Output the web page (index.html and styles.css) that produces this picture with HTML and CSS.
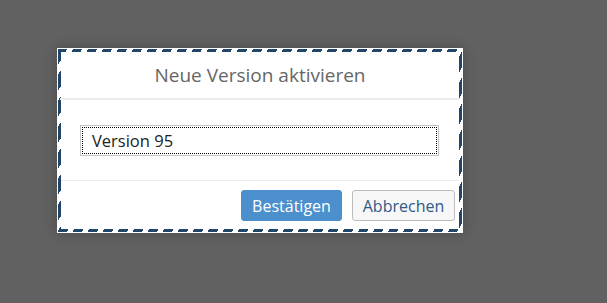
FILE: index.html
```html
<!DOCTYPE html>
<html lang="de">
<head>
<meta charset="utf-8">
<link rel="stylesheet" href="styles.css">
</head>
<body>
<div class="dialog">
  <div class="ring">
    <div class="inner">
      <div class="header">Neue Version aktivieren</div>
      <div class="content">
        <div class="input"><span class="focus">Version 95</span></div>
      </div>
      <div class="footer">
        <button class="btn primary">Bestätigen</button>
        <button class="btn secondary">Abbrechen</button>
      </div>
    </div>
  </div>
</div>
</body>
</html>
```
FILE: styles.css
```css
html, body { margin: 0; height: 100%; }
body {
  background: #616161;
  font-family: "Open Sans", "Noto Sans", sans-serif;
  padding: 48px 0 0 57px;
  box-sizing: border-box;
}
.dialog {
  width: 406px;
  height: 185px;
  box-sizing: border-box;
  background: #fff;
  padding: 1px;
  box-shadow: 0 0 12px rgba(0,0,0,0.25);
}
.ring {
  height: 100%;
  box-sizing: border-box;
  padding: 3px;
  background: repeating-linear-gradient(120deg, #22466a 0 8px, #fff 8px 13px);
}
.inner {
  background: #fff;
  height: 100%;
  display: flex;
  flex-direction: column;
}
.header {
  height: 46px;
  border-bottom: 2px solid #ececec;
  display: flex;
  align-items: center;
  justify-content: center;
  color: #666;
  font-size: 19px;
  margin: 0 -1px;
  flex: none;
}
.content {
  padding: 25px 20px 24px 19px;
  border-bottom: 1px solid #ececec;
}
.input {
  height: 31px;
  box-sizing: border-box;
  border: 1px solid #c4c4c4;
  padding: 1px;
  display: flex;
}
.focus {
  flex: 1;
  border: 1px dotted #000;
  display: flex;
  align-items: center;
  padding-left: 9px;
  font-size: 16.5px;
  color: #222;
}
.footer {
  flex: 1;
  display: flex;
  justify-content: flex-end;
  align-items: flex-start;
  gap: 10px;
  padding: 9px 4px 0 0;
}
.btn {
  height: 31px;
  border-radius: 3px;
  font-family: inherit;
  font-size: 16px;
  padding: 0 9px;
  cursor: pointer;
}
.primary {
  background: #4b8fcd;
  border: 1px solid #4b8fcd;
  color: #fff;
  width: 101px;
}
.secondary {
  background: #f7f7f7;
  border: 1px solid #bdbdbd;
  color: #2f5a86;
  width: 103px;
}
```
